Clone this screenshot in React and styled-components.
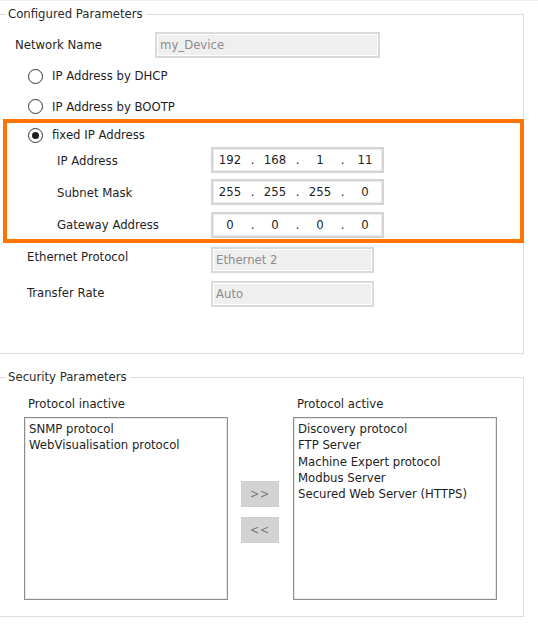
import React from "react";
import styled, { createGlobalStyle } from "styled-components";

const GlobalStyle = createGlobalStyle`
    html, body {
        margin: 0;
        padding: 0;
        background: #fff;
    }
    body {
        font-family: "DejaVu Sans Condensed", "Noto Sans", sans-serif;
        font-size: 13px;
        line-height: 16px;
        color: #1e1e1e;
        border-top: 1px solid #efefef;
        width: 538px;
        height: 624px;
        overflow: hidden;
    }
`;

const Page = styled.div`
    display: flex;
    flex-direction: column;
    margin-left: -2px;
    width: 526px;
`;

const Group = styled.fieldset`
    margin: ${(p) => p.$top}px 0 0 0;
    padding: 0;
    border: 1px solid #dcdcdc;
    height: ${(p) => p.$height}px;
    box-sizing: border-box;
    min-width: 0;
`;

const Legend = styled.legend`
    margin-left: 7px;
    padding: 0 3px 0 2px;
    line-height: 16px;
    color: #2a2a2a;
`;

const Row = styled.div`
    display: flex;
    align-items: center;
    height: 26px;
    margin-top: ${(p) => p.$mt || 0}px;
    padding-left: ${(p) => p.$indent || 0}px;
`;

const Label = styled.span`
    width: ${(p) => p.$w}px;
    flex: none;
    margin-top: ${(p) => p.$lift || 0}px;
`;

const DisabledInput = styled.div`
    width: ${(p) => p.$w}px;
    height: 26px;
    box-sizing: border-box;
    border: 2px solid #dadada;
    box-shadow: inset 0 0 0 1px #fff;
    background: #efefef;
    color: #8c8c8c;
    padding-left: 3px;
    display: flex;
    align-items: center;
`;

const Highlight = styled.div`
    margin: 0 0 0 4px;
    width: 521px;
    height: 124px;
    box-sizing: border-box;
    border: 4px solid #ff7300;
    display: flex;
    flex-direction: column;
`;

const RadioRow = styled.label`
    display: flex;
    align-items: center;
    height: ${(p) => p.$h}px;
    padding-left: ${(p) => p.$indent}px;
    gap: 9px;
`;

const RadioCircle = styled.span`
    width: 13px;
    height: 13px;
    border: 1px solid #333;
    border-radius: 50%;
    background: #fff;
    display: flex;
    align-items: center;
    justify-content: center;
    flex: none;

    &::after {
        content: "";
        width: 7px;
        height: 7px;
        border-radius: 50%;
        background: ${(p) => (p.$checked ? "#1e1e1e" : "transparent")};
    }
`;

const IpBox = styled.div`
    width: 173px;
    height: 26px;
    box-sizing: border-box;
    border: 2px solid #d4d4d4;
    box-shadow: inset 0 0 0 1px #eaeaea;
    background: #fff;
    display: grid;
    grid-template-columns: 34px 11px 34px 11px 34px 11px 34px;
    align-items: center;
    color: #1e1e1e;
`;

const IpPart = styled.span`
    text-align: center;
`;

const SecurityBody = styled.div`
    display: flex;
    gap: 13px;
    padding: 11px 0 0 25px;
`;

const ListColumn = styled.div`
    display: flex;
    flex-direction: column;
`;

const ListTitle = styled.div`
    height: 16px;
    line-height: 16px;
    padding-left: 4px;
    margin-bottom: 5px;
`;

const ListBox = styled.ul`
    list-style: none;
    margin: 0;
    width: 204px;
    height: 183px;
    box-sizing: border-box;
    border: 1px solid #8e8e8e;
    box-shadow: inset 0 0 0 1px #e6e6e6;
    padding: 3px 0 0 4px;
    line-height: 16.3px;
`;

const Buttons = styled.div`
    display: flex;
    flex-direction: column;
    gap: 10px;
    padding-top: 85px;
    margin-right: 1px;
`;

const MoveButton = styled.button`
    width: 38px;
    height: 26px;
    border: 1px solid #cfcfcf;
    background: #d3d3d3;
    color: #7a7a7a;
    font-family: inherit;
    font-size: 12px;
    letter-spacing: 1px;
    padding: 0;
`;

const IpField = ({ value }) => (
    <IpBox>
        {value.map((v, i) => (
            <React.Fragment key={i}>
                {i > 0 && <IpPart>.</IpPart>}
                <IpPart>{v}</IpPart>
            </React.Fragment>
        ))}
    </IpBox>
);

const Radio = ({ checked, children, indent, h }) => (
    <RadioRow $indent={indent} $h={h}>
        <RadioCircle $checked={checked} />
        {children}
    </RadioRow>
);

const App = () => {
    const inactive = ["SNMP protocol", "WebVisualisation protocol"];
    const active = [
        "Discovery protocol",
        "FTP Server",
        "Machine Expert protocol",
        "Modbus Server",
        "Secured Web Server (HTTPS)",
    ];

    return (
        <>
            <GlobalStyle />
            <Page>
                <Group $top={5} $height={348}>
                    <Legend>Configured Parameters</Legend>
                    <Row $mt={10} $indent={16}>
                        <Label $w={140} $lift={-1}>Network Name</Label>
                        <DisabledInput $w={225}>my_Device</DisabledInput>
                    </Row>
                    <Radio indent={29} h={36}>IP Address by DHCP</Radio>
                    <Radio indent={29} h={25}>IP Address by BOOTP</Radio>
                    <Highlight>
                        <Radio indent={21} h={24} checked>fixed IP Address</Radio>
                        <Row $indent={50}>
                            <Label $w={154} $lift={2}>IP Address</Label>
                            <IpField value={["192", "168", "1", "11"]} />
                        </Row>
                        <Row $mt={6} $indent={50}>
                            <Label $w={154} $lift={2}>Subnet Mask</Label>
                            <IpField value={["255", "255", "255", "0"]} />
                        </Row>
                        <Row $mt={7} $indent={50}>
                            <Label $w={154}>Gateway Address</Label>
                            <IpField value={["0", "0", "0", "0"]} />
                        </Row>
                    </Highlight>
                    <Row $mt={4} $indent={28}>
                        <Label $w={184} $lift={-7}>Ethernet Protocol</Label>
                        <DisabledInput $w={163}>Ethernet 2</DisabledInput>
                    </Row>
                    <Row $mt={8} $indent={28}>
                        <Label $w={184} $lift={-2}>Transfer Rate</Label>
                        <DisabledInput $w={163}>Auto</DisabledInput>
                    </Row>
                </Group>
                <Group $top={15} $height={248}>
                    <Legend>Security Parameters</Legend>
                    <SecurityBody>
                        <ListColumn>
                            <ListTitle>Protocol inactive</ListTitle>
                            <ListBox>
                                {inactive.map((p) => (
                                    <li key={p}>{p}</li>
                                ))}
                            </ListBox>
                        </ListColumn>
                        <Buttons>
                            <MoveButton>&gt;&gt;</MoveButton>
                            <MoveButton>&lt;&lt;</MoveButton>
                        </Buttons>
                        <ListColumn>
                            <ListTitle>Protocol active</ListTitle>
                            <ListBox>
                                {active.map((p) => (
                                    <li key={p}>{p}</li>
                                ))}
                            </ListBox>
                        </ListColumn>
                    </SecurityBody>
                </Group>
            </Page>
        </>
    );
};

export default App;
